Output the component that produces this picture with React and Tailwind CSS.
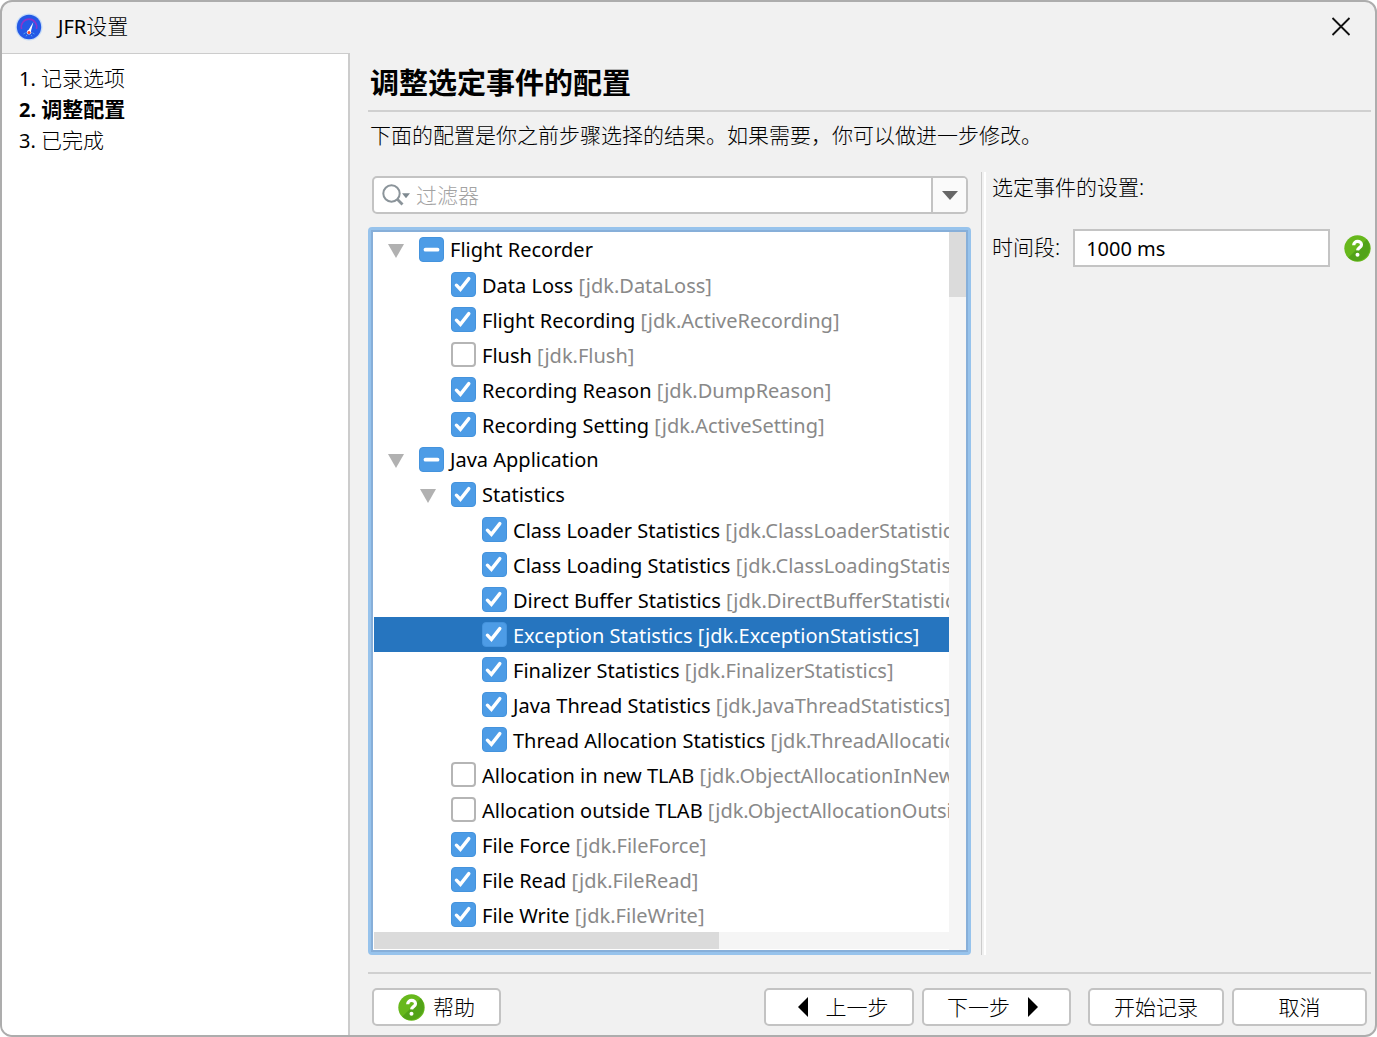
import React, { useState, useEffect, useRef } from "react";

const initialRows = [
  { depth: 0, label: "Flight Recorder", state: "partial", open: true },
  { depth: 1, label: "Data Loss", id: "jdk.DataLoss", state: "on" },
  { depth: 1, label: "Flight Recording", id: "jdk.ActiveRecording", state: "on" },
  { depth: 1, label: "Flush", id: "jdk.Flush", state: "off" },
  { depth: 1, label: "Recording Reason", id: "jdk.DumpReason", state: "on" },
  { depth: 1, label: "Recording Setting", id: "jdk.ActiveSetting", state: "on" },
  { depth: 0, label: "Java Application", state: "partial", open: true },
  { depth: 1, label: "Statistics", state: "on", open: true },
  { depth: 2, label: "Class Loader Statistics", id: "jdk.ClassLoaderStatistics", state: "on" },
  { depth: 2, label: "Class Loading Statistics", id: "jdk.ClassLoadingStatistics", state: "on" },
  { depth: 2, label: "Direct Buffer Statistics", id: "jdk.DirectBufferStatistics", state: "on" },
  { depth: 2, label: "Exception Statistics", id: "jdk.ExceptionStatistics", state: "on" },
  { depth: 2, label: "Finalizer Statistics", id: "jdk.FinalizerStatistics", state: "on" },
  { depth: 2, label: "Java Thread Statistics", id: "jdk.JavaThreadStatistics", state: "on" },
  { depth: 2, label: "Thread Allocation Statistics", id: "jdk.ThreadAllocationStatistics", state: "on" },
  { depth: 1, label: "Allocation in new TLAB", id: "jdk.ObjectAllocationInNewTLAB", state: "off" },
  { depth: 1, label: "Allocation outside TLAB", id: "jdk.ObjectAllocationOutsideTLAB", state: "off" },
  { depth: 1, label: "File Force", id: "jdk.FileForce", state: "on" },
  { depth: 1, label: "File Read", id: "jdk.FileRead", state: "on" },
  { depth: 1, label: "File Write", id: "jdk.FileWrite", state: "on" },
];

const indents = ["pl-0", "pl-8", "pl-[63px]"];
const buttonClass =
  "flex h-[38px] items-center justify-center rounded-[5px] border-2 border-[#c3c3c3] bg-white text-[21px] leading-none font-light";

function AppLogo() {
  return (
    <svg className="size-7" viewBox="0 0 28 28" aria-hidden="true">
      <circle cx="14" cy="14" r="13.5" fill="#c5dcf7" />
      <circle cx="14" cy="14" r="12.2" fill="#2459e6" />
      <path d="M6.6 16a7.7 7.7 0 1 1 14.8 0" fill="none" stroke="#8b35c9" strokeWidth="1.6" />
      <path d="M8.5 21l2-1.2M19.5 21l-2-1.2M11 23.4l1-1.5M17 23.4l-1-1.5" stroke="#4fa5f0" strokeWidth="1" />
      <path d="M18.4 9l-2.8 10.6-3-1.2z" fill="#fff" />
      <circle cx="14" cy="19.3" r="2.2" fill="#fff" />
      <circle cx="14" cy="19.4" r="1.5" fill="#f0452d" />
    </svg>
  );
}

function HelpIcon() {
  return (
    <svg className="size-[27px] shrink-0" viewBox="0 0 27 27" aria-hidden="true">
      <circle cx="13.5" cy="13.5" r="13.2" fill="#67b81c" />
      <path d="M22.8 4.2a13.2 13.2 0 0 1-18.6 18.6z" fill="#52a318" />
      <path d="M9.7 10.2c0-5.1 7.8-4.8 7.8-.5 0 3-3.8 2.8-3.9 5.7" fill="none" stroke="#fff" strokeWidth="3.2" />
      <circle cx="13.5" cy="19.7" r="2" fill="#fff" />
    </svg>
  );
}

function TreeRow({ row, index, selected, onSelect, onToggle }) {
  const ref = useRef(null);
  const inputId = `event-${index}`;

  useEffect(() => {
    ref.current.indeterminate = row.state === "partial";
  }, [row.state]);

  return (
    <li
      onClick={() => onSelect(index)}
      className={`h-[35px] ${selected ? "bg-[#2675bf] text-white" : "text-black"}`}
    >
      <div className={`flex h-full items-center ${indents[row.depth]}`}>
        <span className="flex w-[45px] shrink-0 pt-[2px] pl-[14px]">
          {row.open && (
            <svg className="h-[14px] w-4" viewBox="0 0 16 14" aria-hidden="true">
              <path d="M0 0h16L8 14z" fill="#b1b1b1" />
            </svg>
          )}
        </span>
        <span className="grid shrink-0">
          <input
            ref={ref}
            id={inputId}
            type="checkbox"
            checked={row.state === "on"}
            onChange={() => onToggle(index)}
            className={`col-start-1 row-start-1 size-[25px] appearance-none rounded-[4px] ${
              row.state === "off" ? "border-2 border-[#b5b5b5] bg-white" : "border border-[#4493dd] bg-[#4d9ce6]"
            }`}
          />
          <svg className="pointer-events-none col-start-1 row-start-1 size-[25px]" viewBox="0 0 25 25" fill="none" stroke="#fff" aria-hidden="true">
            {row.state === "on" && <path d="M5.4 13.2l4 4.2L17.8 6.6" strokeWidth="3.4" strokeLinecap="round" />}
            {row.state === "partial" && <path d="M6.5 12.7h12" strokeWidth="3.8" strokeLinecap="round" />}
          </svg>
        </span>
        <label
          htmlFor={inputId}
          className={`pl-[6px] text-[20px] leading-[33px] whitespace-nowrap ${row.id ? "pt-[2px]" : ""}`}
        >
          {row.label}
          {row.id && <span className={selected ? "" : "text-[#898989]"}> [{row.id}]</span>}
        </label>
      </div>
    </li>
  );
}

export default function App() {
  const [rows, setRows] = useState(initialRows);
  const [selected, setSelected] = useState(11);
  const [filter, setFilter] = useState("");
  const [period, setPeriod] = useState("1000 ms");

  const toggle = (index) =>
    setRows((prev) => prev.map((r, i) => (i === index ? { ...r, state: r.state === "on" ? "off" : "on" } : r)));

  return (
    <div className="flex min-h-screen flex-col overflow-hidden rounded-xl border-2 border-[#adadad] bg-[#f1f1f1] font-['Noto_Sans','Noto_Sans_CJK_SC',sans-serif] text-black">
      <header className="flex h-[51px] items-center pr-6 pb-[2px] pl-[13px]">
        <AppLogo />
        <h1 className="flex-1 pl-[15px] text-[20px]">
          JFR<span className="text-[21px] font-light">设置</span>
        </h1>
        <button type="button" aria-label="关闭">
          <svg className="size-5" viewBox="0 0 20 20" stroke="#111" strokeWidth="1.8" aria-hidden="true">
            <path d="M1.5 1l17 17M18.5 1l-17 17" />
          </svg>
        </button>
      </header>

      <div className="flex flex-1">
        <nav className="w-[348px] shrink-0 border-t border-r-2 border-[#cccccc] bg-white px-[17px] pt-[9px]">
          <ol className="text-[20px] leading-[31px]">
            <li>1. <span className="text-[21px] font-light">记录选项</span></li>
            <li className="font-bold">2. <span className="text-[21px]">调整配置</span></li>
            <li>3. <span className="text-[21px] font-light">已完成</span></li>
          </ol>
        </nav>

        <main className="flex min-w-0 flex-1 flex-col pr-1 pl-[18px]">
          <h2 className="border-b-2 border-[#d0d0d0] pt-[10px] pb-[7px] pl-[2px] text-[29px] leading-[40px] font-bold">调整选定事件的配置</h2>
          <p className="pt-[7px] pl-[2px] text-[21px] leading-8 font-light">下面的配置是你之前步骤选择的结果。如果需要，你可以做进一步修改。</p>

          <div className="mt-[21px] flex">
            <section className="min-w-0 flex-1">
              <div className="mt-1 mr-[3px] ml-1 flex h-[38px] items-center overflow-hidden rounded-[5px] border-2 border-[#c3c3c3] bg-white">
                <svg className="ml-2 h-[22px] w-[30px] shrink-0" viewBox="0 0 30 22" fill="none" stroke="#8b949a" aria-hidden="true">
                  <circle cx="9.5" cy="9.5" r="8.2" strokeWidth="2" />
                  <path d="M15.3 15.3l5.2 5.2" strokeWidth="2.8" />
                  <path d="M20 9.3h8l-4 5z" fill="#7f8a91" stroke="none" />
                </svg>
                <input
                  type="text"
                  aria-label="过滤器"
                  placeholder="过滤器"
                  value={filter}
                  onChange={(e) => setFilter(e.target.value)}
                  className="h-full min-w-0 flex-1 pl-1 text-[21px] font-light outline-none placeholder:text-[#a3a3a3]"
                />
                <button type="button" aria-label="过滤器历史" className="flex h-full w-[35px] items-center justify-center border-l-2 border-[#c3c3c3] bg-[#fafafa]">
                  <svg className="h-[9px] w-4" viewBox="0 0 16 9" aria-hidden="true">
                    <path d="M0 0h16L8 9z" fill="#666" />
                  </svg>
                </button>
              </div>

              <div className="mt-[13px] rounded-[4px] border-3 border-[#97c3ec]">
                <div className="flex border-2 border-[#87afd9] bg-[#f5f5f5]">
                  <div className="min-w-0 flex-1">
                    <ul className="overflow-hidden border-l border-white bg-white">
                      {rows.map((row, i) => (
                        <TreeRow key={row.label} row={row} index={i} selected={i === selected} onSelect={setSelected} onToggle={toggle} />
                      ))}
                    </ul>
                    <div className="h-[18px] border-b border-l border-white">
                      <div className="h-full w-3/5 bg-[#dbdbdb]"></div>
                    </div>
                  </div>
                  <div className="w-[17px]">
                    <div className="h-[65px] bg-[#dbdbdb]"></div>
                  </div>
                </div>
              </div>
            </section>

            <aside className="ml-[10px] w-[390px] border-l border-[#cccccc] pl-[2px]">
              <div className="h-full border-l-2 border-white pl-[6px] text-[21px] font-light">
                <h3 className="leading-[30px]">选定事件的设置:</h3>
                <div className="mt-[27px] flex items-center">
                  <label htmlFor="period" className="shrink-0">时间段:</label>
                  <input
                    id="period"
                    type="text"
                    value={period}
                    onChange={(e) => setPeriod(e.target.value)}
                    className="mr-[14px] ml-[13px] h-[38px] min-w-0 flex-1 border-2 border-[#c4c4c4] bg-white px-[11px] text-[20px] font-normal outline-none"
                  />
                  <button type="button" aria-label="帮助"><HelpIcon /></button>
                </div>
              </div>
            </aside>
          </div>

          <footer className="mt-[17px] flex border-t-2 border-[#d0d0d0] pt-[14px] pr-1 pb-[9px] pl-1">
            <button type="button" className={`${buttonClass} w-[129px] gap-2`}>
              <HelpIcon />帮助
            </button>
            <span className="flex-1"></span>
            <button type="button" className={`${buttonClass} w-[150px] gap-[18px] pl-2`}>
              <svg className="h-5 w-[10px]" viewBox="0 0 10 20" aria-hidden="true"><path d="M10 0v20L0 10z" /></svg>
              上一步
            </button>
            <button type="button" className={`${buttonClass} ml-2 w-[149px] gap-[18px] pr-2`}>
              下一步
              <svg className="h-5 w-[10px]" viewBox="0 0 10 20" aria-hidden="true"><path d="M0 0v20l10-10z" /></svg>
            </button>
            <button type="button" className={`${buttonClass} ml-[17px] w-[136px]`}>开始记录</button>
            <button type="button" className={`${buttonClass} ml-2 w-[135px]`}>取消</button>
          </footer>
        </main>
      </div>
    </div>
  );
}
